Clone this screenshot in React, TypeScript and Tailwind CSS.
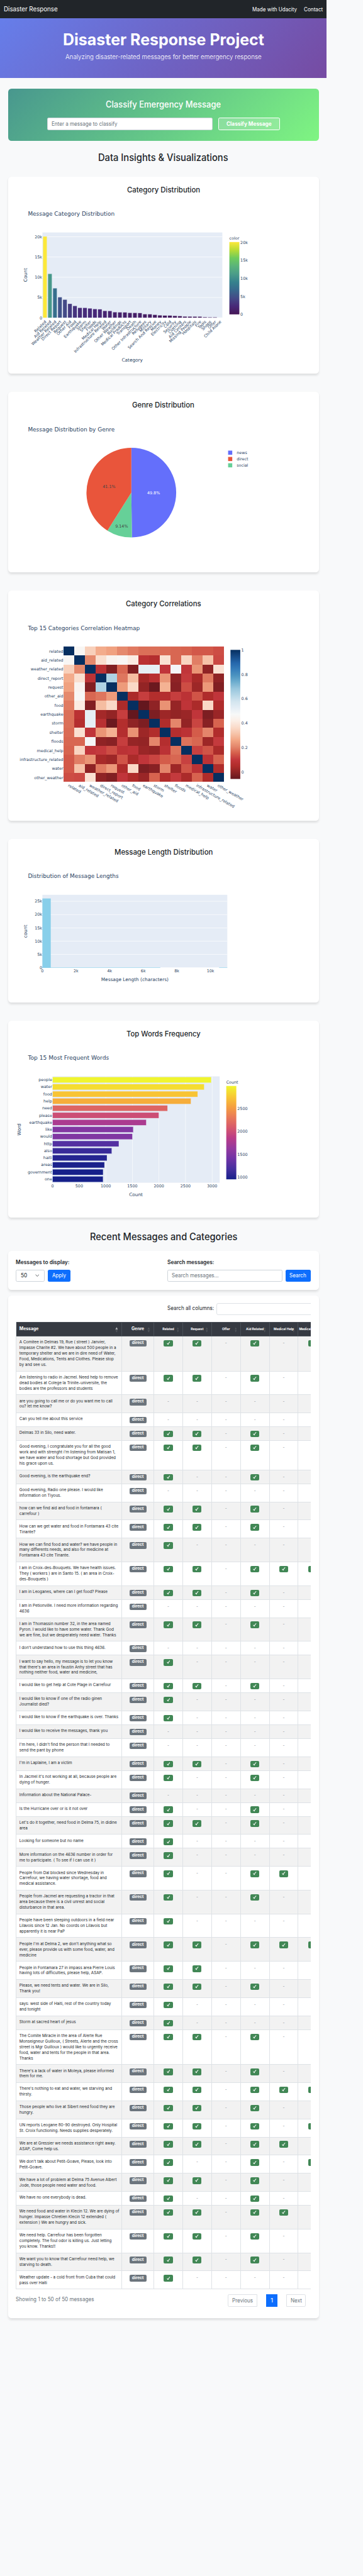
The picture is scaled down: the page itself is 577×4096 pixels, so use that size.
import React from "react";

const INK = "#2a3f5f";

const viridis = ["#461756", "#482878", "#444a87", "#38688d", "#35818d", "#4a9c89", "#5ab37b", "#6ecb5c", "#b8dc35", "#fce83a"];
const plasma = ["#16208a", "#452f9f", "#7033a6", "#953a9e", "#ba3c87", "#d7596b", "#e97a57", "#f5a03f", "#f8ca33", "#f0f52f"];
const rdbu = [
  "#64171e", "#8b2224", "#b02c2b", "#c2363b", "#d55e4b", "#e4866b", "#f2a684", "#f6c3a9", "#fadbca", "#fbeee6", "#f7f8f8",
  "#e5eef5", "#d3e5ef", "#b5d6e6", "#98c6dd", "#6faecf", "#4c94c1", "#367dba", "#2466ab", "#164a86", "#062f60",
];

function pick(scale: string[], t: number): string {
  const p = Math.max(0, Math.min(1, t)) * (scale.length - 1);
  const i = Math.min(scale.length - 2, Math.floor(p));
  const f = p - i;
  const ch = (c: string, k: number) => parseInt(c.slice(1 + k * 2, 3 + k * 2), 16);
  const mix = [0, 1, 2].map((k) => Math.round(ch(scale[i], k) * (1 - f) + ch(scale[i + 1], k) * f));
  return `rgb(${mix.join(",")})`;
}

function Label({ x, y, size = 10.9, w, anchor = "start", rotate, fill = INK, children }: {
  x: number; y: number; size?: number; w?: number; anchor?: "start" | "middle" | "end"; rotate?: number; fill?: string; children: string;
}) {
  return (
    <text
      x={x}
      y={y}
      fontSize={size}
      textAnchor={anchor}
      fill={fill}
      textLength={w}
      lengthAdjust={w ? "spacingAndGlyphs" : undefined}
      transform={rotate ? `rotate(${rotate} ${x} ${y})` : undefined}
    >
      {children}
    </text>
  );
}

function ColorBar({ id, scale, x, y, w, h }: { id: string; scale: string[]; x: number; y: number; w: number; h: number }) {
  return (
    <>
      <defs>
        <linearGradient id={id} x1="0" y1="1" x2="0" y2="0">
          {scale.map((c, i) => (
            <stop key={c} offset={i / (scale.length - 1)} stopColor={c} />
          ))}
        </linearGradient>
      </defs>
      <rect x={x} y={y} width={w} height={h} fill={`url(#${id})`} />
    </>
  );
}

// A single line of text set to an exact width.
function FitText({ width, size, className = "", children }: { width: number; size: number; className?: string; children: string }) {
  const h = Math.round(size * 1.3);
  return (
    <svg className={`block overflow-visible ${className}`} width={width} height={h}>
      <text x={0} y={size * 0.98} fontSize={size} fill="currentColor" textLength={width} lengthAdjust="spacingAndGlyphs">{children}</text>
    </svg>
  );
}

function ChartCard({ title, width, top, height, children }: { title: string; width: number; top: number; height: number; children: React.ReactNode }) {
  return (
    <section className="flex w-[841px] flex-col items-center rounded-[9px] bg-white pt-[22px] shadow-[0_4px_6px_rgba(0,0,0,0.1)]" style={{ height }}>
      <h3 className="h-[26px]">
        <FitText width={width} size={20} className="font-medium text-[#212529]">{title}</FitText>
      </h3>
      <svg className="font-['DejaVu_Sans',sans-serif]" width={841} height={height - 48} viewBox={`22 ${top + 48} 841 ${height - 48}`}>
        {children}
      </svg>
    </section>
  );
}

const categories: [string, number][] = [
  ["Related", 20094], ["Aid Related", 10860], ["Weather Related", 7297], ["Direct Report", 5075], ["Request", 4474], ["Other Aid", 3446],
  ["Food", 2923], ["Earthquake", 2455], ["Storm", 2443], ["Shelter", 2314], ["Floods", 2155], ["Medical Help", 2084],
  ["Infrastructure Related", 1705], ["Water", 1672], ["Other Weather", 1376], ["Buildings", 1333], ["Medical Products", 1313], ["Transport", 1201],
  ["Death", 1194], ["Other Infrastructure", 1151], ["Refugees", 875], ["Military", 860], ["Search And Rescue", 724], ["Money", 604],
  ["Electricity", 532], ["Cold", 530], ["Security", 471], ["Clothing", 405], ["Aid Centers", 309], ["Missing People", 298],
  ["Hospitals", 283], ["Fire", 282], ["Tools", 159], ["Shops", 120], ["Offer", 118], ["Child Alone", 0],
];

function CategoryChart() {
  const y = (v: number) => 861.2 - (v * 54.75) / 5000;
  const step = 487.3 / 36;
  return (
    <>
      <Label x={75.5} y={585} size={15.4} w={234.5}>Message Category Distribution</Label>
      <rect x={114.7} y={630.2} width={487.3} height={231} fill="#e5ecf6" />
      {[0, 5000, 10000, 15000, 20000].map((v) => (
        <g key={v}>
          <rect x={114.7} y={y(v) - 0.6} width={487.3} height={1.2} fill="#fff" />
          <Label x={114} y={y(v) + 4} anchor="end">{v ? `${v / 1000}k` : "0"}</Label>
          <Label x={650.8} y={852.2 - (v / 20094) * 196 + 4}>{v ? `${v / 1000}k` : "0"}</Label>
        </g>
      ))}
      {categories.map(([name, v], i) => {
        const x = 114.7 + i * step;
        return (
          <g key={name}>
            {v > 0 && <rect x={x + step * 0.1} y={y(v)} width={step * 0.8} height={861.2 - y(v)} fill={pick(viridis, v / 20094)} stroke="#e5ecf6" strokeWidth={0.5} />}
            <Label x={x + step / 2 + 4.8} y={873} anchor="end" rotate={-45}>{name}</Label>
          </g>
        );
      })}
      <Label x={358} y={980} size={12.7} anchor="middle" w={57}>Category</Label>
      <Label x={72.5} y={745.3} size={12.7} anchor="middle" rotate={-90}>Count</Label>
      <Label x={621} y={650}>color</Label>
      <ColorBar id="viridis" scale={viridis} x={621} y={656.2} w={27} h={196} />
    </>
  );
}

function GenreChart() {
  const cx = 355.5, cy = 1335.4, r = 121.5;
  const pt = (f: number) => `${cx + r * Math.sin(2 * Math.PI * f)} ${cy - r * Math.cos(2 * Math.PI * f)}`;
  const slice = (a: number, b: number) => `M${cx} ${cy}L${pt(a)}A${r} ${r} 0 0 1 ${pt(b)}Z`;
  return (
    <>
      <Label x={75.5} y={1169} size={15.4} w={235}>Message Distribution by Genre</Label>
      <path d={slice(0, 0.498)} fill="#646ffb" />
      <path d={slice(0.498, 0.5894)} fill="#66d098" />
      <path d={slice(0.5894, 1)} fill="#e9553b" />
      <Label x={415.7} y={1340.2} anchor="middle" fill="#fff">49.8%</Label>
      <Label x={295.3} y={1322.9} anchor="middle" fill="#444">41.1%</Label>
      <Label x={329.2} y={1431} anchor="middle" fill="#444">9.14%</Label>
      {[["news", "#646ffb"], ["direct", "#e9553b"], ["social", "#66d098"]].map(([name, c], i) => (
        <g key={name}>
          <rect x={617.6} y={1221.6 + i * 17.1} width={11.2} height={11.2} fill={c} />
          <Label x={640.8} y={1231 + i * 17.1}>{name}</Label>
        </g>
      ))}
    </>
  );
}

const corrNames = ["related", "aid_related", "weather_related", "direct_report", "request", "other_aid", "food", "earthquake", "storm", "shelter", "floods", "medical_help", "infrastructure_related", "water", "other_weather"];
// Upper triangle of the symmetric matrix, diagonal left out.
const corrUpper: number[][] = [
  [0.46, 0.34, 0.27, 0.25, 0.21, 0.19, 0.175, 0.175, 0.17, 0.165, 0.16, 0.145, 0.145, 0.13],
  [0.21, 0.375, 0.445, 0.46, 0.41, 0.075, 0.06, 0.38, 0.165, 0.35, 0.195, 0.31, 0.125],
  [0.08, -0.02, 0.165, -0.02, 0.52, 0.52, 0.095, 0.48, 0.095, 0.23, 0, 0.38],
  [0.64, 0.185, 0.3, 0.03, 0.07, 0.23, 0, 0.105, 0.035, 0.19, 0],
  [0.24, 0.36, 0.005, -0.05, 0.28, -0.01, 0.13, 0.02, 0.235, -0.02],
  [0.04, 0.11, 0.055, 0.06, 0.11, 0.08, 0.14, 0.045, 0.095],
  [-0.059, 0, 0.225, 0.01, 0.09, 0.04, 0.36, 0.045],
  [-0.025, 0.02, 0.005, 0.015, 0.095, -0.025, 0.015],
  [0.05, 0.205, 0.005, 0.12, -0.01, 0.16],
  [0.06, 0.08, 0.15, 0.205, 0.05],
  [0.18, 0.165, 0.02, 0.105],
  [0.115, 0.14, 0.04],
  [0.08, 0.16],
  [0.045],
];
const corr = (a: number, b: number) => (a === b ? 1 : corrUpper[Math.min(a, b)][Math.abs(a - b) - 1]);

function CorrelationChart() {
  const cw = 433.8 / 15, ch = 367 / 15;
  return (
    <>
      <Label x={75.5} y={1707.4} size={15.4} w={303}>Top 15 Categories Correlation Heatmap</Label>
      <g shapeRendering="crispEdges">
        {corrNames.map((row, r) =>
          corrNames.map((col, c) => (
            <rect key={row + col} x={172.5 + c * cw} y={1752 + r * ch} width={cw} height={ch} fill={pick(rdbu, (corr(r, c) + 0.059) / 1.059)} />
          )),
        )}
      </g>
      {corrNames.map((n, i) => (
        <g key={n}>
          <Label x={171.3} y={1752 + (i + 0.5) * ch + 4} anchor="end">{n}</Label>
          <Label x={183.2 + i * cw} y={2130.5} rotate={30}>{n}</Label>
        </g>
      ))}
      <ColorBar id="rdbu" scale={rdbu} x={624} y={1761} w={26.5} h={349.7} />
      {["0", "0.2", "0.4", "0.6", "0.8", "1"].map((t, i) => (
        <Label key={t} x={653.4} y={2095.3 - i * 66}>{t}</Label>
      ))}
    </>
  );
}

function LengthChart() {
  return (
    <>
      <Label x={75.5} y={2380} size={15.4} w={245.8}>Distribution of Message Lengths</Label>
      <rect x={114.7} y={2425} width={500.7} height={197.5} fill="#e5ecf6" />
      {[0, 5, 10, 15, 20, 25].map((v) => (
        <g key={v}>
          <rect x={114.7} y={2622 - v * 7.2} width={500.7} height={1.1} fill="#fff" />
          <Label x={114} y={2626.5 - v * 7.2} anchor="end">{v ? `${v}k` : "0"}</Label>
        </g>
      ))}
      <rect x={114.7} y={2435} width={22.6} height={188} fill="#88cfea" />
      <rect x={114.7} y={2622} width={319.3} height={1.1} fill="#88cfea" />
      <rect x={593} y={2622} width={22.4} height={1.1} fill="#88cfea" />
      {["0", "2k", "4k", "6k", "8k", "10k"].map((t, i) => (
        <Label key={t} x={114.7 + i * 91.05} y={2635} anchor="middle">{t}</Label>
      ))}
      <Label x={365} y={2659} size={12.7} anchor="middle" w={182.5}>Message Length (characters)</Label>
      <Label x={72.5} y={2524} size={12.7} anchor="middle" rotate={-90}>count</Label>
    </>
  );
}

const words: [string, number][] = [
  ["people", 2983], ["water", 2850], ["food", 2727], ["help", 2600], ["need", 2160], ["please", 1997], ["earthquake", 1760], ["like", 1517],
  ["would", 1500], ["http", 1246], ["also", 1112], ["haiti", 1022], ["areas", 975], ["government", 950], ["one", 949],
];

function WordsChart() {
  const step = 288.2 / 15;
  return (
    <>
      <Label x={75.5} y={2873} size={15.4} w={219.5}>Top 15 Most Frequent Words</Label>
      <rect x={142.3} y={2918} width={452.4} height={288.2} fill="#e5ecf6" />
      {[0, 500, 1000, 1500, 2000, 2500, 3000].map((v, i) => (
        <g key={v}>
          {v > 0 && <rect x={141.8 + i * 72} y={2918} width={1} height={288.2} fill="#fff" />}
          <Label x={142.3 + i * 72} y={3218} anchor="middle">{String(v)}</Label>
        </g>
      ))}
      {words.map(([w, v], i) => (
        <g key={w}>
          <rect x={142.3} y={2918 + i * step + step * 0.1} width={v * 0.144} height={step * 0.8} fill={pick(plasma, (v - 949) / 2034)} stroke="#e5ecf6" strokeWidth={0.5} />
          <Label x={141} y={2918 + (i + 0.5) * step + 3.5} anchor="end">{w}</Label>
        </g>
      ))}
      <Label x={368} y={3242} size={12.7} anchor="middle" w={37}>Count</Label>
      <Label x={56.2} y={3062} size={12.7} anchor="middle" rotate={-90}>Word</Label>
      <Label x={612.6} y={2938}>Count</Label>
      <ColorBar id="plasma" scale={plasma} x={612.6} y={2944} w={27.2} h={253} />
      {["1000", "1500", "2000", "2500"].map((t, i) => (
        <Label key={t} x={642.6} y={3195.2 - i * 62}>{t}</Label>
      ))}
    </>
  );
}

// Flags: R related, Q request, A aid related, M medical help, P medical products
const messages: [string[], string][] = [
  [["A Comitee in Delmas 19, Rue ( street ) Janvier,", "Impasse Charite #2. We have about 500 people in a", "temporary shelter and we are in dire need of Water,", "Food, Medications, Tents and Clothes. Please stop", "by and see us."], "RQAP"],
  [["Am listening to radio in Jacmel. Need help to remove", "dead bodies at Colege la Trinite-universite, the", "bodies are the professors and students"], "RQA"],
  [["are you going to call me or do you want me to call", "ou? let me know?"], ""],
  [["Can you tell me about this service"], ""],
  [["Delmas 33 in Silo, need water."], "RQA"],
  [["Good evening, I congratulate you for all the good", "work and with strenght i'm listening from Matisan 1,", "we have water and food shortage but God provided", "his grace upon us."], "RQA"],
  [["Good evening, is the earthquake end?"], "RA"],
  [["Good evening, Radio one please. I would like", "information on Tiyous."], ""],
  [["how can we find aid and food in fontamara (", "carrefour )"], "RQA"],
  [["How can we get water and food in Fontamara 43 cite", "Tinante?"], "RQA"],
  [["How we can find food and water? we have people in", "many differents needs, and also for medicine at", "Fontamara 43 cite Tinante."], "R"],
  [["I am in Croix-des-Bouquets. We have health issues.", "They ( workers ) are in Santo 15. ( an area in Croix-", "des-Bouquets )"], "RQAMP"],
  [["I am in Leoganes, where can I get food? Please"], "RQA"],
  [["I am in Petionville. I need more information regarding", "4636"], ""],
  [["I am in Thomassin number 32, in the area named", "Pyron. I would like to have some water. Thank God", "we are fine, but we desperately need water. Thanks"], "RQA"],
  [["I don't understand how to use this thing 4636."], ""],
  [["I want to say hello, my message is to let you know", "that there's an area in faustin Anhy street that has", "nothing neither food, water and medicine,"], "R"],
  [["I would like to get help at Cote Plage in Carrefour"], "RQA"],
  [["I would like to know if one of the radio ginen", "Journalist died?"], "R"],
  [["I would like to know if the earthquake is over. Thanks"], "R"],
  [["I would like to receive the messages, thank you"], ""],
  [["I'm here, I didn't find the person that I needed to", "send the pant by phone"], ""],
  [["I'm in Laplaine, I am a victim"], "RQA"],
  [["In Jacmel it's not working at all, because people are", "dying of hunger."], "RA"],
  [["Information about the National Palace-"], ""],
  [["Is the Hurricane over or is it not over"], "RA"],
  [["Let's do it together, need food in Delma 75, in didine", "area"], "RQA"],
  [["Looking for someone but no name"], "R"],
  [["More information on the 4636 number in order for", "me to participate. ( To see if I can use it )"], "R"],
  [["People from Dal blocked since Wednesday in", "Carrefour, we having water shortage, food and", "medical assistance."], "RAM"],
  [["People from Jacmel are requesting a tractor in that", "area because there is a civil unrest and social", "disturbance in that area."], "RA"],
  [["People have been sleeping outdoors in a field near", "Lilavois since 12 Jan. No coords on Lilavois but", "apparently it is near PaP"], "R"],
  [["People I'm at Delma 2, we don't anything what so", "ever, please provide us with some food, water, and", "medicine"], "RQAMP"],
  [["People in Fontamara 27 in impass area Pierre Louis", "having lots of difficulties, please help, ASAP."], "RQ"],
  [["Please, we need tents and water. We are in Silo,", "Thank you!"], "RQA"],
  [["says: west side of Haiti, rest of the country today", "and tonight"], "R"],
  [["Storm at sacred heart of jesus"], "R"],
  [["The Comite Miracle in the area of Alerte Rue", "Monseigneur Guilloux, ( Streets, Alerte and the cross", "street is Mgr Guilloux ) would like to urgently receive", "food, water and tents for the people in that area.", "Thanks"], "RQA"],
  [["There's a lack of water in Moleya, please informed", "them for me."], "RQA"],
  [["There's nothing to eat and water, we starving and", "thirsty."], "RQAMP"],
  [["Those people who live at Sibert need food they are", "hungry."], "RQA"],
  [["UN reports Leogane 80-90 destroyed. Only Hospital", "St. Croix functioning. Needs supplies desperately."], "RQAP"],
  [["We are at Gressier we needs assistance right away.", "ASAP, Come help us."], "RQAM"],
  [["We don't talk about Petit-Goave, Please, look into", "Petit-Goave."], "RAP"],
  [["We have a lot of problem at Delma 75 Avenue Albert", "Jode, those people need water and food."], "RQA"],
  [["We have no one everybody is dead."], "RA"],
  [["We need food and water in Klecin 12. We are dying of", "hunger. Impasse Chretien Klecin 12 extended (", "extension ) We are hungry and sick."], "RQAM"],
  [["We need help. Carrefour has been forgotten", "completely. The foul odor is killing us. Just letting", "you know. Thanks!!"], "RQA"],
  [["We want you to know that Carrefour need help, we", "starving to death."], "RQA"],
  [["Weather update - a cold front from Cuba that could", "pass over Haiti"], "R"],
];

const rowHeight = (lines: number) => (lines === 1 ? 37.5 : 18.85 + 15.15 * lines);

function SortArrows({ active = false, small = false }: { active?: boolean; small?: boolean }) {
  return (
    <svg className={`absolute top-[12px] ${small ? "right-[9px]" : "right-[9.5px]"}`} width={small ? 6 : 8} height="15" viewBox="0 0 8 15" preserveAspectRatio="none">
      <path d="M0.6 6.8 4 0.4 7.4 6.8Z" fill={active ? "#b4b6b9" : "#50545a"} />
      <path d="M0.6 8.4 4 14.8 7.4 8.4Z" fill="#50545a" />
    </svg>
  );
}

const flagHeads = ["Related", "Request", "Offer", "Aid Related", "Medical Help", "Medical Products"];
const flagKeys = ["R", "Q", "O", "A", "M", "P"];

function FlagMark({ on }: { on: boolean }) {
  if (!on) return <span className="h-[18px] text-[10.9px] leading-[17px] text-[#8a9096]">-</span>;
  return (
    <span className="flex h-[18px] w-[24px] shrink-0 items-center justify-center rounded-[3.5px] bg-[#418755]">
      <svg width="10" height="10" viewBox="0 0 10 10" fill="none" stroke="#fff" strokeWidth="1.8" strokeLinecap="round" strokeLinejoin="round">
        <path d="M1.6 5.4 3.6 8.2Q5 4.4 8.4 1.2" />
      </svg>
    </span>
  );
}

function MessageTable() {
  return (
    <div className="w-[798.7px] overflow-hidden">
      <div className="w-[843.1px] border-l border-[#dee2e6]">
        <div className="flex h-[39px] border-y border-[#495057] bg-[#363a42] font-bold text-white">
          <div className="relative flex w-[286.2px] items-center border-r border-[#495057] pl-[7.5px] text-[11.7px]">
            Message
            <SortArrows active />
          </div>
          <div className="relative flex w-[87.1px] items-center justify-center border-r border-[#495057] text-[11.7px]">
            Genre
            <SortArrows />
          </div>
          {flagHeads.map((h) => (
            <div key={h} className="relative flex w-[78.3px] items-center justify-center whitespace-nowrap border-r border-[#495057] text-[8.6px]">
              <span className="relative z-10">{h}</span>
              <SortArrows small />
            </div>
          ))}
        </div>
        {messages.map(([lines, flags], i) => (
          <div
            key={lines[0]}
            className={`flex border-b border-[#dee2e6] ${i % 2 ? "bg-white" : "bg-[#f2f2f2]"}`}
            style={{ height: rowHeight(lines.length) }}
          >
            <div className="w-[286.2px] whitespace-nowrap border-r border-[#dee2e6] pl-[7.5px] pt-[9px] text-[10.75px] leading-[15.15px] text-[#212529]">
              {lines.map((l) => (
                <div key={l}>{l}</div>
              ))}
            </div>
            <div className="flex w-[87.1px] justify-center border-r border-[#dee2e6] pt-[9.8px]">
              <span className="flex h-[18px] w-[46px] items-center justify-center rounded-[3.5px] bg-[#6c757d] text-[11.2px] font-bold text-white">direct</span>
            </div>
            {flagKeys.map((k) => (
              <div key={k} className="flex w-[78.3px] justify-center border-r border-[#dee2e6] pt-[9.8px]">
                {(k !== "P" || flags.includes(k)) && <FlagMark on={flags.includes(k)} />}
              </div>
            ))}
          </div>
        ))}
      </div>
    </div>
  );
}

export default function App() {
  return (
    <div className="h-[4096px] w-[577px] overflow-hidden bg-[#f8f9fa]">
      <div className="w-[983px] font-['Inter','Liberation_Sans',sans-serif] text-[#212529] [zoom:0.58698]">
        <div className="flex w-[885px] flex-col items-center">
          <nav className="flex h-[50px] w-full items-center justify-between bg-[#212529] px-[11px] pt-[1.5px] text-white">
            <FitText width={146} size={18.2}>Disaster Response</FitText>
            <div className="flex gap-[18px]">
              <FitText width={121} size={14.5}>Made with Udacity</FitText>
              <FitText width={51.5} size={14.5}>Contact</FitText>
            </div>
          </nav>

          <header className="flex h-[161px] w-full flex-col items-center bg-[linear-gradient(135deg,#667eea_0%,#764ba2_100%)] pt-[30px] text-white">
            <FitText width={545} size={44} className="font-bold">Disaster Response Project</FitText>
            <div className="pt-[6.5px]">
              <FitText width={531} size={18.2} className="font-light">Analyzing disaster-related messages for better emergency response</FitText>
            </div>
          </header>

          <section className="mt-[29px] flex h-[142px] w-[841px] flex-col items-center rounded-[9px] bg-[linear-gradient(135deg,#48978e_0%,#7ff582_100%)] pt-[27px] text-white">
            <FitText width={312} size={24} className="font-medium">Classify Emergency Message</FitText>
            <div className="mt-[21px] flex gap-[15px]">
              <div className="flex h-[34px] w-[449px] items-center rounded-[4px] border border-[#ced4da] bg-white pl-[11px] text-[#6c757d]">
                <FitText width={178} size={14.5}>Enter a message to classify</FitText>
              </div>
              <div className="flex h-[34px] w-[167px] items-center justify-center rounded-[4px] border border-white bg-white/20">
                <FitText width={122} size={14.5} className="font-bold">Classify Message</FitText>
              </div>
            </div>
          </section>

          <h2 className="mt-[29px] h-[68px]">
            <FitText width={352} size={26} className="font-medium">Data Insights &amp; Visualizations</FitText>
          </h2>

          <div className="flex flex-col gap-[50px]">
            <ChartCard title="Category Distribution" width={198} top={479} height={533}><CategoryChart /></ChartCard>
            <ChartCard title="Genre Distribution" width={168.6} top={1062} height={488}><GenreChart /></ChartCard>
            <ChartCard title="Category Correlations" width={203.8} top={1600} height={623}><CorrelationChart /></ChartCard>
            <ChartCard title="Message Length Distribution" width={266.5} top={2273.5} height={442.5}><LengthChart /></ChartCard>
            <ChartCard title="Top Words Frequency" width={200.6} top={2767} height={533}><WordsChart /></ChartCard>
          </div>

          <h2 className="mt-[36px] h-[54.5px]">
            <FitText width={399.4} size={26} className="font-medium">Recent Messages and Categories</FitText>
          </h2>

          <section className="flex h-[106px] w-[841px] rounded-[9px] bg-white px-[21.3px] pt-[22px] shadow-[0_4px_6px_rgba(0,0,0,0.1)]">
            <div className="w-[410px]">
              <FitText width={145.5} size={14.5} className="font-semibold">Messages to display:</FitText>
              <div className="mt-[9px] flex gap-[8.5px]">
                <div className="flex h-[34px] w-[77.3px] items-center justify-between rounded-[4px] border border-[#ced4da] pl-[11px] pr-[13px]">
                  <FitText width={17.5} size={14.5}>50</FitText>
                  <svg width="11" height="11" viewBox="0 0 16 16" fill="none" stroke="#343a40" strokeWidth="2" strokeLinecap="round" strokeLinejoin="round">
                    <path d="m2 5 6 6 6-6" />
                  </svg>
                </div>
                <div className="flex h-[34px] w-[61px] items-center justify-center rounded-[4px] bg-[#0d6efd] text-white">
                  <FitText width={37.5} size={14.5}>Apply</FitText>
                </div>
              </div>
            </div>
            <div>
              <FitText width={127} size={14.5} className="font-semibold">Search messages:</FitText>
              <div className="mt-[9px] flex gap-[7.5px]">
                <div className="flex h-[34px] w-[312.3px] items-center rounded-[4px] border border-[#ced4da] pl-[11px] text-[#6c757d]">
                  <FitText width={127} size={14.5}>Search messages...</FitText>
                </div>
                <div className="flex h-[34px] w-[69px] items-center justify-center rounded-[4px] bg-[#0d6efd] text-white">
                  <FitText width={45.5} size={14.5}>Search</FitText>
                </div>
              </div>
            </div>
          </section>

          <section className="mt-[14px] h-[2770px] w-[841px] rounded-[9px] bg-white px-[21.3px] pt-[21.5px] shadow-[0_4px_6px_rgba(0,0,0,0.1)]">
            <div className="flex h-[51px] overflow-hidden pl-[410px]">
              <div className="shrink-0 pt-[5.5px]">
                <FitText width={126} size={14.5}>Search all columns:</FitText>
              </div>
              <div className="ml-[6.7px] h-[32px] w-[300px] shrink-0 rounded-[5px] border border-[#dee2e6]" />
            </div>
            <MessageTable />
            <div className="flex justify-between pt-[12.5px]">
              <div className="pt-[6.5px] text-[#6c757d]">
                <FitText width={212} size={14.5}>Showing 1 to 50 of 50 messages</FitText>
              </div>
              <div className="mr-[13px] flex gap-[24px] text-[#6c757d]">
                <div className="flex h-[35.5px] w-[80px] items-center justify-center rounded-l-[4px] border border-[#dee2e6]">
                  <FitText width={56.5} size={14.5}>Previous</FitText>
                </div>
                <div className="flex h-[35.5px] w-[30px] items-center justify-center bg-[#0d6efd] text-white">
                  <FitText width={7} size={14.5}>1</FitText>
                </div>
                <div className="flex h-[35.5px] w-[54px] items-center justify-center rounded-r-[4px] border border-[#dee2e6]">
                  <FitText width={30.5} size={14.5}>Next</FitText>
                </div>
              </div>
            </div>
          </section>
        </div>
      </div>
    </div>
  );
}
